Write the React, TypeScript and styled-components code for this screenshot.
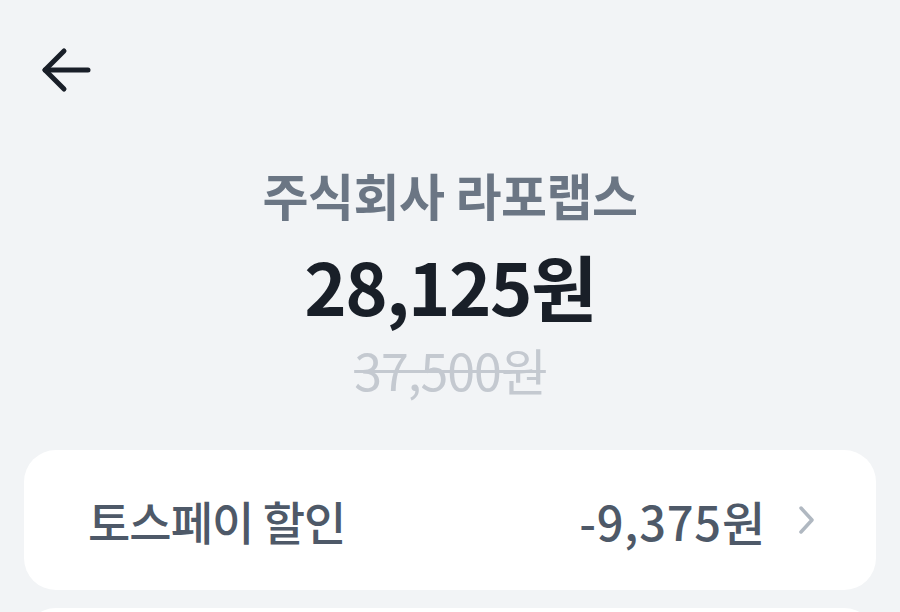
import styled, { createGlobalStyle } from 'styled-components';

const GlobalStyle = createGlobalStyle`
  html, body {
    margin: 0;
    padding: 0;
    background: #f2f4f6;
    font-family: "Noto Sans CJK KR", "Noto Sans", sans-serif;
  }
`;

const Page = styled.div`
  width: 900px;
  height: 612px;
  overflow: hidden;
  background: #f2f4f6;
  display: flex;
  flex-direction: column;

  & > * {
    flex-shrink: 0;
  }
`;

const TopBar = styled.div`
  height: 140px;
  padding: 46px 0 0 40px;
  display: flex;
  align-items: flex-start;
  box-sizing: border-box;
`;

const BackButton = styled.button`
  border: 0;
  background: none;
  padding: 0;
  width: 52px;
  height: 48px;
  color: #191f28;
  cursor: pointer;
`;

const Summary = styled.div`
  padding-top: 24px;
  display: flex;
  flex-direction: column;
  align-items: center;
`;

const Merchant = styled.div`
  font-size: 50px;
  font-weight: 700;
  color: #6b7684;
  line-height: 60px;
  letter-spacing: -0.5px;
`;

const Price = styled.div`
  font-size: 72px;
  font-weight: 700;
  color: #191f28;
  line-height: 96px;
  letter-spacing: -1.5px;
  margin-top: 13px;
`;

const OriginalPrice = styled.div`
  font-size: 50px;
  font-weight: 400;
  color: #c4c9d0;
  text-decoration: line-through;
  text-decoration-thickness: 3px;
  line-height: 60px;
  letter-spacing: -1px;
  margin-top: 6px;
`;

const Card = styled.div<{ gap?: number }>`
  margin: ${p => p.gap ?? 0}px 24px 0;
  background: #ffffff;
  border-radius: 32px;
  height: 140px;
  padding: 0 60px 0 64px;
  display: flex;
  align-items: center;
`;

const RowLabel = styled.div`
  flex: 1;
  font-size: 46px;
  font-weight: 500;
  color: #4e5968;
  letter-spacing: -1px;
`;

const RowValue = styled.div`
  font-size: 47px;
  font-weight: 500;
  color: #4e5968;
  letter-spacing: 0.8px;
  margin-right: 30px;
`;

const Chevron = styled.svg`
  width: 20px;
  height: 32px;
  color: #b0b8c1;
`;

export default function App() {
  return (
    <>
      <GlobalStyle />
      <Page>
        <TopBar>
          <BackButton aria-label="뒤로">
            <svg viewBox="0 0 52 48" width="52" height="48" fill="none" stroke="currentColor" strokeWidth="5" strokeLinecap="round" strokeLinejoin="round">
              <path d="M48 24H5" />
              <path d="M24 5L5 24l19 19" />
            </svg>
          </BackButton>
        </TopBar>
        <Summary>
          <Merchant>주식회사 라포랩스</Merchant>
          <Price>28,125원</Price>
          <OriginalPrice>37,500원</OriginalPrice>
        </Summary>
        <Card gap={51}>
          <RowLabel>토스페이 할인</RowLabel>
          <RowValue>-9,375원</RowValue>
          <Chevron viewBox="0 0 20 32" fill="none" stroke="currentColor" strokeWidth="3.5" strokeLinecap="round" strokeLinejoin="round">
            <path d="M5 4l11 12L5 28" />
          </Chevron>
        </Card>
        <Card gap={18} />
      </Page>
    </>
  );
}
